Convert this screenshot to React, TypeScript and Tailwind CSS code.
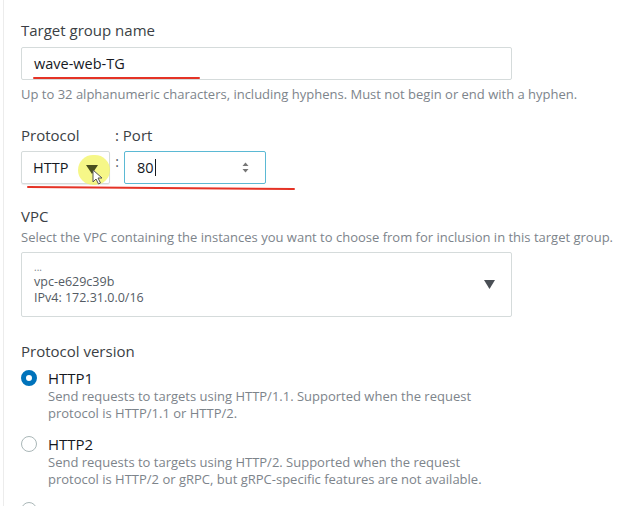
import React from "react";

const font = { fontFamily: "'Open Sans', 'Noto Sans', sans-serif" };

export default function App() {
  return (
    <div
      className="relative w-[633px] h-[506px] overflow-hidden bg-white text-[#16191f]"
      style={font}
    >
      <div className="absolute left-[3px] top-0 h-full w-px bg-[#ececec]" />
      <div className="pl-[21px] pt-[20px]">
        {/* Target group name */}
        <div className="text-[15px] leading-[20px] text-[#3b3f45]">Target group name</div>
        <div className="relative mt-[7px] w-[491px] h-[33px] border border-[#d5dbdb] rounded-[2px] flex items-center pl-[12px]">
          <span className="text-[14.5px] text-[#16191f]">wave-web-TG</span>
          <div className="absolute left-[11px] top-[29px] w-[167px] h-[2px] bg-[#e53326] rounded-full" />
        </div>
        <div className="mt-[6px] text-[13px] leading-[17px] text-[#7d848b] whitespace-nowrap">
          Up to 32 alphanumeric characters, including hyphens. Must not begin or end with a hyphen.
        </div>

        {/* Protocol : Port */}
        <div className="mt-[22px] flex text-[15px] leading-[20px] text-[#3b3f45]">
          <span className="w-[94px]">Protocol</span>
          <span>: Port</span>
        </div>
        <div className="relative mt-[6px] flex items-start">
          <div className="relative w-[89px] h-[33px] border border-[#d5dbdb] rounded-[2px] flex items-center pl-[11px] shadow-[0_1px_1px_rgba(0,0,0,0.08)]">
            <span className="text-[14.5px]">HTTP</span>
            <div className="absolute left-[56px] top-[3px] w-[32px] h-[30px] rounded-full bg-[#f4f56a] opacity-80" />
            <svg className="absolute left-[64px] top-[13px]" width="12" height="9" viewBox="0 0 12 9">
              <path d="M0 0 L12 0 L6 9 Z" fill="#4a4f1e" />
            </svg>
            <svg className="absolute left-[70px] top-[17px]" width="12" height="16" viewBox="0 0 12 16">
              <path d="M1 1 L1 13 L4 10 L6.5 15 L8.5 14 L6 9 L10 9 Z" fill="white" stroke="#555" strokeWidth="1" />
            </svg>
          </div>
          <span className="w-[14px] text-center text-[14px] leading-[20px] text-[#545b64] mt-[1px]">:</span>
          <div className="w-[142px] h-[33px] border-[1.5px] border-[#5bb9d4] rounded-[2px] flex items-center pl-[12px] pr-[16px] justify-between">
            <span className="text-[14.5px] flex items-center">
              80<span className="inline-block w-px h-[17px] bg-[#16191f] ml-[1px]" />
            </span>
            <svg width="7" height="11" viewBox="0 0 7 11">
              <path d="M0.5 4 L3.5 0.5 L6.5 4 Z" fill="#777" />
              <path d="M0.5 7 L3.5 10.5 L6.5 7 Z" fill="#777" />
            </svg>
          </div>
          <svg className="absolute left-[6px] top-[34px]" width="268" height="6" viewBox="0 0 268 6">
            <path d="M1 2 L267 4" stroke="#e53326" strokeWidth="2" strokeLinecap="round" />
          </svg>
        </div>

        {/* VPC */}
        <div className="mt-[22px] text-[15px] leading-[20px] text-[#3b3f45]">VPC</div>
        <div className="mt-[3px] text-[13px] leading-[17px] text-[#7d848b] whitespace-nowrap">
          Select the VPC containing the instances you want to choose from for inclusion in this target group.
        </div>
        <div className="mt-[6px] w-[491px] h-[65px] border border-[#d5dbdb] rounded-[2px] flex items-center justify-between pl-[12px] pr-[16px]">
          <div className="text-[12.5px] leading-[15.5px] text-[#545b64]">
            <div className="text-[10px] leading-[14px] text-[#7d848b] -mt-[4px]">...</div>
            <div>vpc-e629c39b</div>
            <div>IPv4: 172.31.0.0/16</div>
          </div>
          <svg width="11" height="9" viewBox="0 0 11 9">
            <path d="M0 0 L11 0 L5.5 9 Z" fill="#4a4f55" />
          </svg>
        </div>

        {/* Protocol version */}
        <div className="mt-[24px] text-[15px] leading-[20px] text-[#3b3f45]">Protocol version</div>
        <div className="mt-[7px] flex">
          <div className="w-[27px] pt-[2px]">
            <div className="w-[16px] h-[16px] rounded-full border-[5px] border-[#0073bb] bg-white" />
          </div>
          <div>
            <div className="text-[15px] leading-[20px] text-[#16191f]">HTTP1</div>
            <div className="text-[13px] leading-[16.5px] text-[#7d848b] w-[440px]">
              Send requests to targets using HTTP/1.1. Supported when the request protocol is HTTP/1.1 or HTTP/2.
            </div>
          </div>
        </div>
        <div className="mt-[13px] flex">
          <div className="w-[27px] pt-[2px]">
            <div className="w-[16px] h-[16px] rounded-full border border-[#aab7b8] bg-white" />
          </div>
          <div>
            <div className="text-[15px] leading-[20px] text-[#16191f]">HTTP2</div>
            <div className="text-[13px] leading-[16.5px] text-[#7d848b] w-[440px]">
              Send requests to targets using HTTP/2. Supported when the request protocol is HTTP/2 or gRPC, but gRPC-specific features are not available.
            </div>
          </div>
        </div>
        <div className="mt-[13px] flex">
          <div className="w-[27px] pt-[2px]">
            <div className="w-[16px] h-[16px] rounded-full border border-[#aab7b8] bg-white" />
          </div>
          <div className="text-[15px] leading-[20px] text-[#16191f]">gRPC</div>
        </div>
      </div>
    </div>
  );
}
